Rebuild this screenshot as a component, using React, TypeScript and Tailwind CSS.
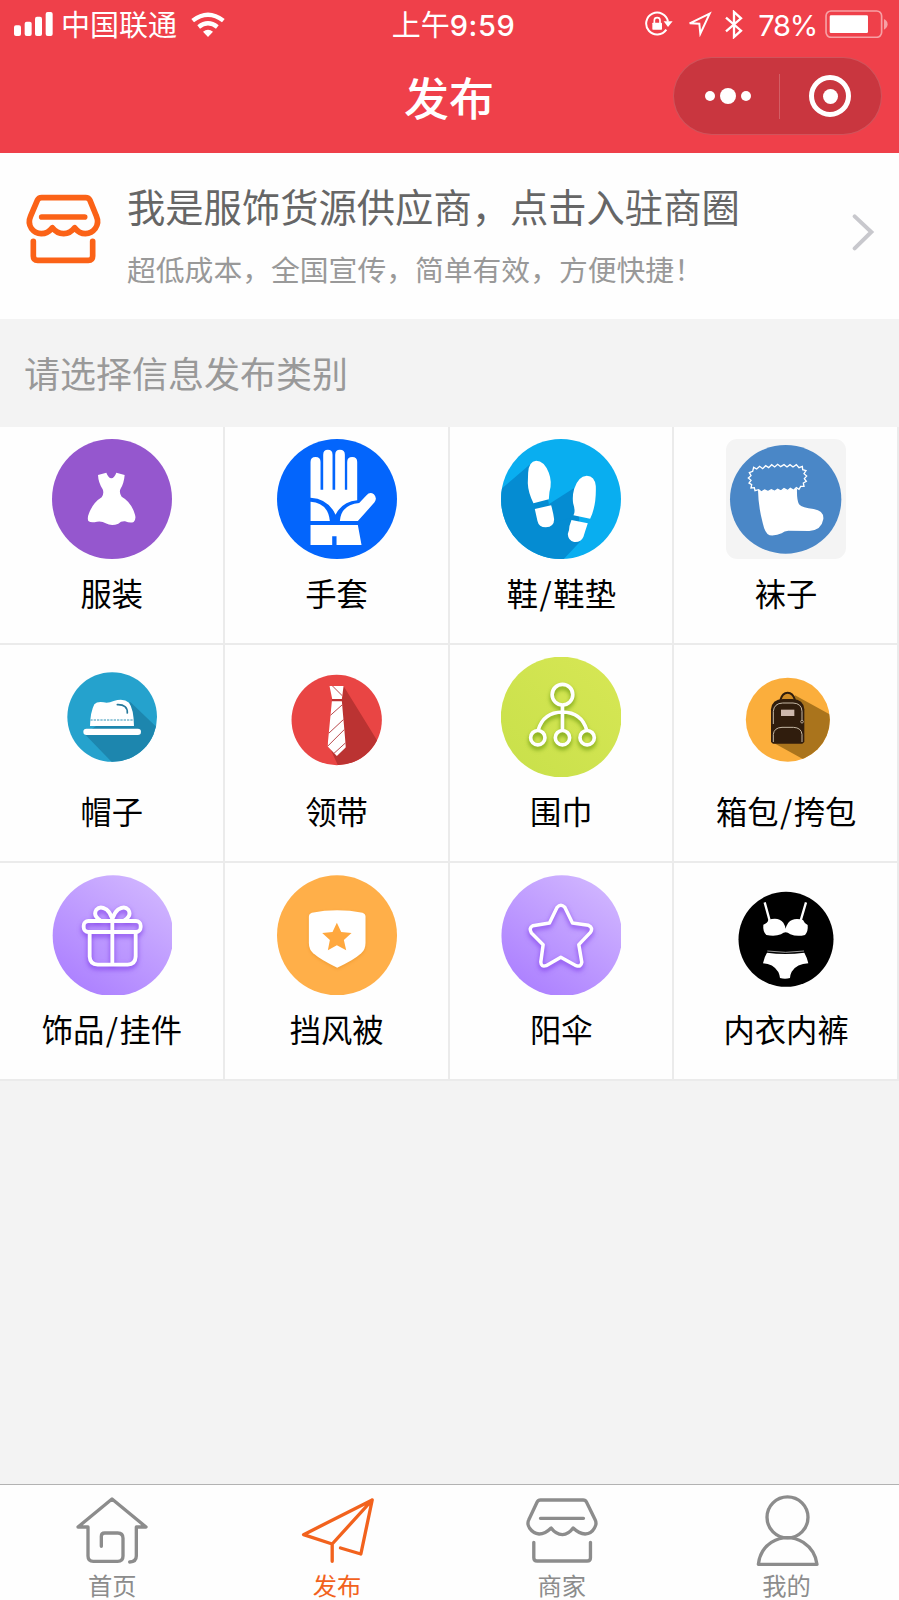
import type { ReactNode } from 'react';
import clsx from 'clsx';

type IconProps = { viewBox: string; className?: string; children: ReactNode };

function Icon({ viewBox, className, children }: IconProps) {
  return (
    <svg viewBox={viewBox} className={clsx('shrink-0', className)} fill="none" aria-hidden="true">
      {children}
    </svg>
  );
}

/* ---------- status bar ---------- */

function SignalIcon() {
  return (
    <Icon viewBox="42 36 117 72" className="w-[39px] h-6">
      <g fill="#fff">
        <rect x="42" y="76" width="21" height="32" rx="6" />
        <rect x="74" y="65" width="21" height="43" rx="6" />
        <rect x="105" y="50" width="21" height="58" rx="6" />
        <rect x="137" y="36" width="21" height="72" rx="6" />
      </g>
    </Icon>
  );
}

function WifiIcon() {
  return (
    <Icon viewBox="574 34 102 75" className="w-[34px] h-[25px]">
      <g stroke="#fff" strokeWidth="13">
        <path d="M579 60 Q625 24 671 60" />
        <path d="M597 79 Q625 57 653 79" />
      </g>
      <path d="M610 93 Q625 82 640 93 L625 109Z" fill="#fff" />
    </Icon>
  );
}

function RotationLockIcon() {
  return (
    <Icon viewBox="592 34 84 76" className="w-7 h-[25.3px]">
      <path d="M656 90 A33 33 0 1 1 661 66" stroke="#fff" strokeWidth="6" />
      <path d="M648 65 H675 L661 82Z" fill="#fff" />
      <rect x="614" y="69" width="29" height="21" rx="2" fill="#fff" />
      <path d="M620 70 V62 Q620 54 628.500 54 Q637 54 637 62 V70" stroke="#fff" strokeWidth="5" />
    </Icon>
  );
}

function LocationIcon() {
  return (
    <Icon viewBox="718 34 75 76" className="w-[25px] h-[25.3px]">
      <path d="M726 71 L786 42 L758 102 L755 72Z" stroke="#fff" strokeWidth="6" />
    </Icon>
  );
}

function BluetoothIcon() {
  return (
    <Icon viewBox="831 30 54 87" className="w-[18px] h-[29px]">
      <path d="M834 53 L879 92 L858 111 V36 L879 55 L834 94" stroke="#fff" strokeWidth="7" />
    </Icon>
  );
}

function BatteryIcon() {
  return (
    <Icon viewBox="1127 29 189 85" className="w-[63px] h-[28.300px]">
      <rect x="1130" y="32" width="167" height="79" rx="15" stroke="#fff" strokeOpacity=".5" strokeWidth="5" />
      <rect x="1141" y="45" width="115" height="53" rx="4" fill="#fff" />
      <path d="M1304 56 Q1315 61 1315 72 Q1315 82 1304 88Z" fill="#fff" fillOpacity=".5" />
    </Icon>
  );
}

function StatusBar() {
  return (
    <div className="grid grid-cols-3 h-12 items-center text-[29px] leading-none text-white">
      <div className="flex items-center pl-3.5">
        <SignalIcon />
        <span className="ml-2 mr-3.5 pt-0.5">中国联通</span>
        <WifiIcon />
      </div>
      <div className="flex justify-center whitespace-nowrap pl-2 pt-0.5">
        上午<span className="font-medium tracking-[0.6px]">9:59</span>
      </div>
      <div className="flex items-center justify-end pr-[11px]">
        <RotationLockIcon />
        <span className="ml-3.5"><LocationIcon /></span>
        <span className="ml-[13px]"><BluetoothIcon /></span>
        <span className="ml-[15px] mr-2 pt-0.5 tracking-[-1.2px]">78%</span>
        <BatteryIcon />
      </div>
    </div>
  );
}

function Header() {
  return (
    <header className="h-[153px] bg-[#ef404a]">
      <StatusBar />
      <div className="grid grid-cols-3 h-24 items-center">
        <h1 className="col-start-2 pt-1.5 pr-px text-center text-[45px] leading-none font-medium text-white">发布</h1>
        <div className="justify-self-end mr-[17px] flex items-center w-[209px] h-[78px] rounded-full border border-white/15 bg-[#c9363f]">
          <div className="flex flex-1 items-center justify-center gap-[5px] pl-1">
            <i className="size-2.5 rounded-full bg-white" />
            <i className="size-4 rounded-full bg-white" />
            <i className="size-2.5 rounded-full bg-white" />
          </div>
          <div className="w-px h-[45px] bg-white/20" />
          <div className="flex flex-1 items-center justify-center">
            <div className="flex size-[42px] items-center justify-center rounded-full border-[5px] border-white">
              <i className="size-[15px] rounded-full bg-white" />
            </div>
          </div>
        </div>
      </div>
    </header>
  );
}

/* ---------- supplier banner ---------- */

function Banner() {
  return (
    <section className="flex h-[166px] bg-[#fefefe] pl-[23px] pr-6">
      <Icon viewBox="70 95 240 225" className="mt-[38px] w-20 h-[75px]">
        <g stroke="#fb6217" strokeWidth="17" strokeLinecap="round" strokeLinejoin="round">
          <path d="M126 115 H258 Q267 115 271 123 L290 170 Q299 190 287 207 Q276 222 257 223 Q239 223 225 205 Q212 222 192 223 Q171 222 158 205 Q144 223 125 223 Q106 222 95 207 Q84 190 93 170 L113 123 Q117 115 126 115Z" />
          <path d="M126 173 H255" />
          <path d="M101 246 V290 Q101 303 114 303 H266 Q279 303 279 290 V246" />
        </g>
      </Icon>
      <div className="ml-6 flex-1 whitespace-nowrap pt-[30px]">
        <h2 className="text-[38.300px] leading-[50px] text-[#666]">我是服饰货源供应商，点击入驻商圈</h2>
        <p className="mt-[18px] text-[28.800px] leading-10 text-[#999]">超低成本，全国宣传，简单有效，方便快捷！</p>
      </div>
      <Icon viewBox="1208 160 69 117" className="mt-[60px] w-[23px] h-[39px]">
        <path d="M1216 170 L1266 217 L1216 266" stroke="#c8c8cd" strokeWidth="12" strokeLinecap="round" />
      </Icon>
    </section>
  );
}

/* ---------- category icons ---------- */

const box = 'size-[120px]';

function DressIcon() {
  return (
    <Icon viewBox="157 57 360 360" className={box}>
      <circle cx="337" cy="237" r="180" fill="#9557ce" />
      <path
        d="M295 165 L320 158 Q326 174 335 175 Q344 174 350 158 L375 165 Q373 190 362 208 Q358 218 366 230 Q395 246 406 284 Q410 298 402 306 Q392 310 376 304 Q364 303 356 311 Q336 319 318 310 Q308 303 292 305 Q274 310 266 303 Q262 294 268 280 Q280 248 306 232 Q314 220 309 208 Q296 188 295 165Z"
        fill="#fff"
      />
    </Icon>
  );
}

function GloveIcon() {
  return (
    <Icon viewBox="831.4 57 360 360" className={box}>
      <circle cx="1011.400" cy="237" r="180" fill="#0365fc" />
      <g fill="#fff">
        <path d="M932 233 V126 Q932 111 947 111 Q962 111 962 126 V209 H970 V104 Q970 89 984 89 Q998 89 998 104 V209 H1006 V104 Q1006 89 1020 89 Q1035 89 1035 104 V209 H1042 V126 Q1042 111 1057 111 Q1072 111 1072 126 V241 Q1026 246 1007 284 Q985 236 932 233Z" />
        <path d="M932 245 Q984 248 990 303 H932Z" />
        <path d="M1020 303 Q1024 254 1078 249 L1100 226 Q1110 214 1122 223 Q1133 234 1124 247 L1074 303Z" />
        <path d="M932 315 H1074 L1085 375 H1010 V349 H997 V375 H932Z" />
      </g>
    </Icon>
  );
}

function ShoesIcon() {
  return (
    <Icon viewBox="158.6 57 360 360" className={box}>
      <clipPath id="shoes-clip">
        <circle cx="338.600" cy="237" r="180" />
      </clipPath>
      <g clipPath="url(#shoes-clip)">
        <rect x="158" y="57" width="361" height="361" fill="#09aef0" />
        <path d="M246 133 L150 215 V417 H347 L395 366 L390 200 L303 256 L300 240Z" fill="#058cd2" />
        <path d="M303 252 L378 204 L380 290 L310 310Z" fill="#058cd2" />
      </g>
      <g fill="#fff">
        <path d="M240 158 Q242 124 264 122 Q288 122 302 158 Q313 186 304 216 L302 238 L256 250 Q240 218 239 190Z" />
        <path d="M260 267 L309 256 Q315 276 318 298 Q318 321 293 322 Q272 322 268 303Z" />
        <path d="M378 207 Q390 168 416 167 Q440 168 443 198 Q445 258 426 296 L376 286 Q383 276 375 250 Q372 228 378 207Z" />
        <path d="M370 300 L419 310 Q411 334 406 350 Q398 368 378 366 Q360 362 359 342 Q364 328 364 318Z" />
      </g>
    </Icon>
  );
}

function SockIcon() {
  return (
    <Icon viewBox="833 57 360 360" className={box}>
      <rect x="833" y="57" width="360" height="360" rx="34" fill="#f4f4f4" />
      <ellipse cx="1012" cy="238" rx="167" ry="163" fill="#4a87c7" />
      <path
        d="M929 210 L1046 206 Q1045 240 1052 253 Q1062 264 1096 267 Q1127 272 1125 297 Q1120 330 1083 333 L1020 332 Q1008 333 1000 340 Q984 348 964 346 Q950 341 943 308 Q930 260 929 210Z"
        fill="#fff"
      />
      <path
        d="M916 142 L925 147 L934 139 L943 146 L952 137 L961 143 L970 134 L979 141 L988 133 L997 140 L1007 134 L1016 141 L1025 134 L1034 141 L1044 134 L1052 143 L1062 139 L1063 149 L1073 152 L1067 161 L1075 168 L1068 176 L1074 184 L1065 189 L1067 199 L1057 199 L1052 208 L1044 203 L1036 211 L1026 205 L1018 212 L1007 206 L998 213 L988 208 L979 214 L969 209 L959 215 L949 210 L939 216 L931 209 L920 212 L918 203 L908 204 L910 194 L902 189 L908 181 L900 174 L908 167 L903 158 L913 154Z"
        fill="#4a87c7"
        stroke="#fff"
        strokeWidth="4"
      />
    </Icon>
  );
}

function HatIcon() {
  return (
    <Icon viewBox="157 51 360 360" className={box}>
      <clipPath id="hat-clip">
        <circle cx="337.500" cy="231" r="134.500" />
      </clipPath>
      <g clipPath="url(#hat-clip)">
        <rect x="200" y="95" width="275" height="275" fill="#25a2cd" />
        <path d="M392 186 L475 265 V370 H340 L255 282Z" fill="#1d86ae" />
      </g>
      <path
        d="M271 258 Q272 216 284 193 Q292 184 312 187 Q326 190 342 183 Q372 174 388 188 Q402 206 403 258Z"
        fill="#fff"
      />
      <path d="M353 194 Q384 193 383 219" stroke="#25789a" strokeWidth="5" strokeLinecap="round" />
      <path d="M272 240 H402" stroke="#7ab9d0" strokeWidth="4" strokeDasharray="7 3" />
      <rect x="251" y="266" width="173" height="19" rx="9.500" fill="#fff" />
    </Icon>
  );
}

function TieIcon() {
  return (
    <Icon viewBox="831.4 51 360 360" className={box}>
      <clipPath id="tie-clip">
        <circle cx="1010.500" cy="240" r="135.500" />
      </clipPath>
      <clipPath id="tie-shape">
        <path d="M989 138 H1031 L1026 177 H997Z M996 184 H1026 L1038 322 L1011 348 L983 319Z" />
      </clipPath>
      <g clipPath="url(#tie-clip)">
        <rect x="870" y="100" width="280" height="280" fill="#e94544" />
        <path d="M1031 138 L1136 308 L1090 380 H1016 L994 332 L1026 184Z" fill="#bb3332" />
        <path d="M996 176 H1027 V185 H996Z" fill="#bb3332" />
      </g>
      <g clipPath="url(#tie-shape)">
        <rect x="980" y="130" width="60" height="220" fill="#fff" />
        <path
          d="M998 138 L1028 168 M985 232 L1032 190 M980 286 L1040 230 M980 322 L1042 260 M998 344 L1042 304"
          stroke="#b9484c"
          strokeWidth="3"
        />
      </g>
    </Icon>
  );
}

function ScarfIcon() {
  return (
    <Icon viewBox="158.6 51 360 360" className={box}>
      <defs>
        <linearGradient id="lime" x1="0" y1="1" x2="1" y2="0">
          <stop offset="0" stopColor="#c8e04a" />
          <stop offset="1" stopColor="#d7e755" />
        </linearGradient>
      </defs>
      <circle cx="339" cy="231" r="181" fill="url(#lime)" />
      <g stroke="#fff" strokeWidth="11" className="drop-shadow-[0_9px_7px_rgba(90,140,0,0.75)]">
        <circle cx="343" cy="164" r="31" />
        <circle cx="269" cy="293" r="21.500" />
        <circle cx="343" cy="293" r="21.500" />
        <circle cx="417" cy="293" r="21.500" />
        <path d="M343 195 V271 M270 271 Q285 217 343 216 Q401 217 416 271" />
      </g>
    </Icon>
  );
}

function BackpackIcon() {
  return (
    <Icon viewBox="833 51 360 360" className={box}>
      <clipPath id="bag-clip">
        <circle cx="1018.500" cy="239" r="126" />
      </clipPath>
      <g clipPath="url(#bag-clip)">
        <rect x="890" y="110" width="256" height="256" fill="#fbae3c" />
        <path d="M1040 166 L1150 226 V356 H1062 L975 308Z" fill="#aa741c" />
      </g>
      <path d="M996 180 Q1002 158 1018 158 Q1034 158 1040 180" stroke="#301d0d" strokeWidth="6" fill="#d18c25" />
      <path d="M968 306 V208 Q970 178 1004 177 H1032 Q1066 178 1068 208 V306 L1062 311 H974Z" fill="#301d0d" />
      <g stroke="#c5b8a5" strokeWidth="3">
        <path d="M975 252 V214 Q977 190 1003 189 H1034 Q1060 190 1061 214 V240" />
        <path d="M975 306 V283 Q977 263 1001 262 H1035 Q1059 263 1061 283 V306" />
      </g>
      <rect x="998" y="209" width="40" height="19" fill="#cdb8ac" />
      <circle cx="1061" cy="245" r="4" stroke="#c5b8a5" strokeWidth="2.500" />
    </Icon>
  );
}

function GiftIcon() {
  return (
    <Icon viewBox="157 45 360 360" className={box}>
      <defs>
        <linearGradient id="gift-bg" x1="0.15" y1="1" x2="0.85" y2="0">
          <stop offset="0" stopColor="#aa7dff" />
          <stop offset="1" stopColor="#d2b8ff" />
        </linearGradient>
      </defs>
      <circle cx="340" cy="227" r="181" fill="url(#gift-bg)" />
      <g stroke="#fff" strokeWidth="11.500" strokeLinejoin="round" className="drop-shadow-[0_8px_8px_rgba(120,50,230,0.8)]">
        <rect x="252" y="183" width="171" height="33" rx="14" />
        <path d="M270 217 V290 Q271 313 294 314 H384 Q407 313 408 290 V217" />
        <path d="M338 176 V313" />
        <path d="M302 181 Q279 166 290 149 Q301 136 320 148 Q332 158 338 177 Q344 158 356 148 Q375 136 386 149 Q397 166 374 181" />
      </g>
    </Icon>
  );
}

function ShieldIcon() {
  return (
    <Icon viewBox="831.4 45 360 360" className={box}>
      <circle cx="1011.400" cy="226" r="180" fill="#ffaf49" />
      <path
        d="M936 158 Q1012 144 1088 158 Q1097 161 1097 170 V248 Q1097 268 1084 280 Q1060 302 1012 323 Q966 302 940 280 Q927 268 927 248 V170 Q927 161 936 158Z"
        fill="#fff"
        className="drop-shadow-[0_4px_4px_rgba(220,130,20,0.4)]"
      />
      <path
        d="M1011 188 L1024 216 L1055 219 L1032 240 L1039 271 L1011 256 L984 271 L990 240 L967 219 L998 216Z"
        fill="#ffa83e"
      />
    </Icon>
  );
}

function StarIcon() {
  return (
    <Icon viewBox="158.6 45 360 360" className={box}>
      <defs>
        <linearGradient id="star-bg" x1="0.15" y1="1" x2="0.85" y2="0">
          <stop offset="0" stopColor="#aa7dff" />
          <stop offset="1" stopColor="#d2b8ff" />
        </linearGradient>
      </defs>
      <circle cx="341" cy="227" r="181" fill="url(#star-bg)" />
      <path
        d="M327 142 Q338 130 350 142 L373 189 L421 196 Q436 203 427 217 L392 254 L401 307 Q399 322 384 317 L338 292 L294 317 Q279 322 278 306 L285 254 L250 219 Q241 204 254 197 L304 189Z"
        stroke="#fff"
        strokeWidth="10.500"
        strokeLinejoin="round"
        className="drop-shadow-[0_8px_8px_rgba(120,50,230,0.8)]"
      />
    </Icon>
  );
}

function UnderwearIcon() {
  return (
    <Icon viewBox="833 45 360 360" className={box}>
      <circle cx="1013" cy="238" r="142.500" fill="#000" />
      <path d="M949 127 L964 182 M1073 127 L1057 182" stroke="#fff" strokeWidth="7" />
      <g fill="#fff">
        <path d="M960 180 Q990 170 1005 188 Q1010 196 1012 206 Q1014 196 1020 188 Q1034 172 1064 180 Q1068 190 1078 195 Q1080 214 1070 225 Q1046 231 1026 223 Q1018 217 1012 217 Q1006 217 998 223 Q980 230 954 225 Q943 214 945 194 Q958 190 960 180Z" />
        <path d="M956 278 Q1010 286 1068 278 Q1076 292 1080 310 Q1046 311 1030 335 Q1025 345 1025 354 Q1010 359 995 354 Q994 345 990 336 Q974 311 944 310 Q948 290 956 278Z" />
      </g>
      <path d="M957 273 Q1012 281 1067 273" stroke="#bbb" strokeWidth="2.500" />
    </Icon>
  );
}

const categories: { name: string; icon: ReactNode }[] = [
  { name: '服装', icon: <DressIcon /> },
  { name: '手套', icon: <GloveIcon /> },
  { name: '鞋/鞋垫', icon: <ShoesIcon /> },
  { name: '袜子', icon: <SockIcon /> },
  { name: '帽子', icon: <HatIcon /> },
  { name: '领带', icon: <TieIcon /> },
  { name: '围巾', icon: <ScarfIcon /> },
  { name: '箱包/挎包', icon: <BackpackIcon /> },
  { name: '饰品/挂件', icon: <GiftIcon /> },
  { name: '挡风被', icon: <ShieldIcon /> },
  { name: '阳伞', icon: <StarIcon /> },
  { name: '内衣内裤', icon: <UnderwearIcon /> },
];

function CategoryGrid() {
  return (
    <div className="grid grid-cols-4">
      {categories.map(c => (
        <div
          key={c.name}
          className="flex h-[218px] flex-col items-center border-r-2 border-b-2 border-[#ebebeb] bg-[#fefefe] pt-3 pr-px pl-0.5"
        >
          {c.icon}
          <span className="mt-[11px] font-['Noto_Sans_CJK_SC',sans-serif] text-[31.300px] leading-[46px] text-black">
            {c.name.split('/').map((part, i) => (
              <span key={part + i}>
                {i > 0 && <span className="px-[1.500px]">/</span>}
                {part}
              </span>
            ))}
          </span>
        </div>
      ))}
    </div>
  );
}

/* ---------- tab bar ---------- */

const tabIcon = 'w-20 h-[74px] stroke-current stroke-[10] [stroke-linecap:round] [stroke-linejoin:round]';

const tabs: { name: string; active?: boolean; icon: ReactNode }[] = [
  {
    name: '首页',
    icon: (
      <Icon viewBox="217 57 240 222" className={tabIcon}>
        <path d="M305 214 V184 Q305 174 315 174 H354 Q370 174 370 190 V243 Q370 259 354 259 H281 Q265 259 265 243 V156 H235 L337 72 L439 156 H410 V243 Q410 260 390 261" />
      </Icon>
    ),
  },
  {
    name: '发布',
    active: true,
    icon: (
      <Icon viewBox="891.4 57 240 222" className={tabIcon}>
        <path d="M997 259 V207 L911 179 L1117 75 L997 207 M1117 75 L1083 237 L1022 219" />
      </Icon>
    ),
  },
  {
    name: '商家',
    icon: (
      <Icon viewBox="218.6 57 240 222" className={tabIcon}>
        <path d="M274 75 H402 Q409 75 412 81 L438 134 Q444 146 436 159 Q427 176 408 177 Q390 176 372 159 Q358 178 340 179 Q320 178 306 159 Q288 177 270 177 Q252 175 241 159 Q233 146 239 134 L264 81 Q267 75 274 75Z M274 130 H403 M254 202 V248 Q254 258 264 258 H414 Q424 258 424 248 V202" />
      </Icon>
    ),
  },
  {
    name: '我的',
    icon: (
      <Icon viewBox="893 57 240 222" className={tabIcon}>
        <circle cx="1014.500" cy="127" r="61.500" />
        <path d="M927 268 Q932 224 966 202 Q1014 174 1062 202 Q1098 226 1103 268Z" />
      </Icon>
    ),
  },
];

function TabBar() {
  return (
    <nav className="grid grid-cols-4 h-[116px] border-t border-[#b2b2b2] bg-[#fefefe] pt-[9px]">
      {tabs.map(tab => (
        <a
          key={tab.name}
          className={clsx('flex flex-col items-center', tab.active ? 'text-[#f2621d]' : 'text-[#8c8c8c]')}
        >
          {tab.icon}
          <span className="mt-1 text-[24.300px] leading-7">{tab.name}</span>
        </a>
      ))}
    </nav>
  );
}

export default function App() {
  return (
    <div className="flex min-h-[1600px] w-full flex-col bg-[#f3f3f3] font-[Inter,'Noto_Sans_CJK_SC',sans-serif]">
      <Header />
      <Banner />
      <h3 className="h-[108px] pl-6 text-[36px] leading-[112px] text-[#999]">请选择信息发布类别</h3>
      <CategoryGrid />
      <div className="flex-1" />
      <TabBar />
    </div>
  );
}
